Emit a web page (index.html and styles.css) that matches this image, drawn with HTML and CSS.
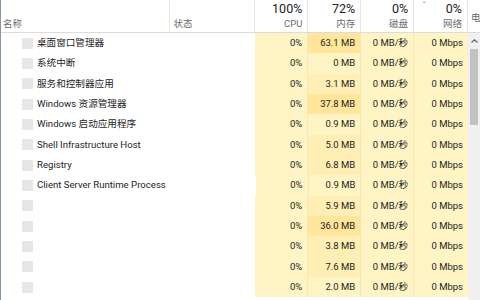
FILE: index.html
```html
<!DOCTYPE html>
<html lang="zh-CN">

<head>
    <meta charset="UTF-8">
    <title>任务管理器</title>
    <link rel="stylesheet" href="styles.css">
</head>

<body>
    <div class="window">
        <div class="header">
            <div class="hcell name"><span class="label">名称</span></div>
            <div class="hcell status"><span class="label">状态</span></div>
            <div class="hcell num"><span class="pct">100%</span><span class="label">CPU</span></div>
            <div class="hcell num"><span class="pct">72%</span><span class="label">内存</span></div>
            <div class="hcell num"><span class="pct">0%</span><span class="label">磁盘</span></div>
            <div class="hcell num sorted"><span class="chev">&#x02C7;</span><span class="pct">0%</span><span class="label">网络</span></div>
            <div class="hcell extra"><span class="label">电</span></div>
        </div>

        <div class="body">
            <div class="rows">
                <div class="row"><div class="cell name"><i class="icon"></i>桌面窗口管理器</div><div class="cell status"></div><div class="cell h1">0%</div><div class="cell h3">63.1 MB</div><div class="cell h1">0 MB/秒</div><div class="cell h1">0 Mbps</div></div>
                <div class="row"><div class="cell name"><i class="icon"></i>系统中断</div><div class="cell status"></div><div class="cell h1">0%</div><div class="cell h1">0 MB</div><div class="cell h1">0 MB/秒</div><div class="cell h1">0 Mbps</div></div>
                <div class="row"><div class="cell name"><i class="icon"></i>服务和控制器应用</div><div class="cell status"></div><div class="cell h1">0%</div><div class="cell h2">3.1 MB</div><div class="cell h1">0 MB/秒</div><div class="cell h1">0 Mbps</div></div>
                <div class="row"><div class="cell name"><i class="icon"></i>Windows 资源管理器</div><div class="cell status"></div><div class="cell h1">0%</div><div class="cell h3">37.8 MB</div><div class="cell h1">0 MB/秒</div><div class="cell h1">0 Mbps</div></div>
                <div class="row"><div class="cell name"><i class="icon"></i>Windows 启动应用程序</div><div class="cell status"></div><div class="cell h1">0%</div><div class="cell h1">0.9 MB</div><div class="cell h1">0 MB/秒</div><div class="cell h1">0 Mbps</div></div>
                <div class="row"><div class="cell name"><i class="icon"></i>Shell Infrastructure Host</div><div class="cell status"></div><div class="cell h1">0%</div><div class="cell h2">5.0 MB</div><div class="cell h1">0 MB/秒</div><div class="cell h1">0 Mbps</div></div>
                <div class="row"><div class="cell name"><i class="icon"></i>Registry</div><div class="cell status"></div><div class="cell h1">0%</div><div class="cell h2">6.8 MB</div><div class="cell h1">0 MB/秒</div><div class="cell h1">0 Mbps</div></div>
                <div class="row"><div class="cell name"><i class="icon"></i>Client Server Runtime Process</div><div class="cell status"></div><div class="cell h1">0%</div><div class="cell h1">0.9 MB</div><div class="cell h1">0 MB/秒</div><div class="cell h1">0 Mbps</div></div>
                <div class="row"><div class="cell name"><i class="icon"></i></div><div class="cell status"></div><div class="cell h1">0%</div><div class="cell h2">5.9 MB</div><div class="cell h1">0 MB/秒</div><div class="cell h1">0 Mbps</div></div>
                <div class="row"><div class="cell name"><i class="icon"></i></div><div class="cell status"></div><div class="cell h1">0%</div><div class="cell h3">36.0 MB</div><div class="cell h1">0 MB/秒</div><div class="cell h1">0 Mbps</div></div>
                <div class="row"><div class="cell name"><i class="icon"></i></div><div class="cell status"></div><div class="cell h1">0%</div><div class="cell h2">3.8 MB</div><div class="cell h1">0 MB/秒</div><div class="cell h1">0 Mbps</div></div>
                <div class="row"><div class="cell name"><i class="icon"></i></div><div class="cell status"></div><div class="cell h1">0%</div><div class="cell h2">7.6 MB</div><div class="cell h1">0 MB/秒</div><div class="cell h1">0 Mbps</div></div>
                <div class="row"><div class="cell name"><i class="icon"></i></div><div class="cell status"></div><div class="cell h1">0%</div><div class="cell h1">2.0 MB</div><div class="cell h1">0 MB/秒</div><div class="cell h1">0 Mbps</div></div>
            </div>

            <div class="scrollbar">
                <div class="arrow">
                    <svg width="7" height="4" viewBox="0 0 7 4"><path d="M0.5 3.5 L3.5 0.8 L6.5 3.5" fill="none" stroke="#606060" stroke-width="1.1"/></svg>
                </div>
                <div class="thumb"></div>
            </div>
        </div>
    </div>
</body>

</html>
```

FILE: styles.css
```css
body {
    margin: 0;
    background: #ffffff;
    font-family: Roboto, "Noto Sans CJK SC", sans-serif;
    color: #1e1e1e;
    overflow: hidden;
}

.window {
    width: 480px;
    height: 300px;
    border-left: 1px solid #8796aa;
    box-sizing: border-box;
    overflow: hidden;
}

.header {
    display: flex;
    height: 33px;
    border-bottom: 1px solid #dcdcdc;
    box-sizing: border-box;
}

.hcell {
    display: flex;
    flex-direction: column;
    justify-content: flex-end;
    border-right: 1px solid #e6e6e6;
    box-sizing: border-box;
    padding: 0 5px 2px 2px;
    position: relative;
}

.hcell .label {
    font-size: 9.5px;
    line-height: 13px;
    color: #6c6c6c;
}

.hcell .pct {
    font-size: 12.5px;
    line-height: 17px;
    color: #222222;
}

.hcell.num {
    align-items: flex-end;
    width: 53px;
}

.hcell.name {
    width: 169px;
}

.hcell.status {
    width: 86px;
    padding-left: 4px;
}

.hcell.sorted {
    width: 54px;
}

.hcell.extra {
    width: 12px;
    border-right: none;
    padding-left: 3px;
    justify-content: flex-start;
    padding-top: 11px;
}

.chev {
    position: absolute;
    left: 8px;
    top: 1px;
    font-size: 10px;
    color: #888888;
}

.body {
    display: flex;
}

.rows {
    width: 467px;
}

.row {
    display: flex;
    height: 20.33px;
}

.cell {
    width: 53px;
    box-sizing: border-box;
    padding-right: 5px;
    text-align: right;
    font-size: 9.5px;
    line-height: 20.33px;
    border-right: 1px solid #f7e9b4;
    white-space: nowrap;
}

.cell:last-child {
    width: 54px;
    border-right: none;
}

.cell.name {
    width: 169px;
    display: flex;
    align-items: center;
    text-align: left;
    padding-left: 21px;
    font-size: 9.6px;
    border-right: none;
}

.cell.status {
    width: 86px;
    border-right: none;
}

.icon {
    width: 11px;
    height: 11px;
    background: #e6e6e6;
    margin-right: 4px;
    flex-shrink: 0;
}

.h1 {
    background: #fff4c4;
}

.h2 {
    background: #ffefb4;
}

.h3 {
    background: #ffe69a;
}

.scrollbar {
    width: 12px;
    height: 267px;
    background: #f0f0f0;
    display: flex;
    flex-direction: column;
    align-items: center;
}

.arrow {
    height: 16px;
    display: flex;
    align-items: center;
    justify-content: center;
}

.thumb {
    width: 8px;
    height: 76px;
    background: #c2c2c2;
}
```
